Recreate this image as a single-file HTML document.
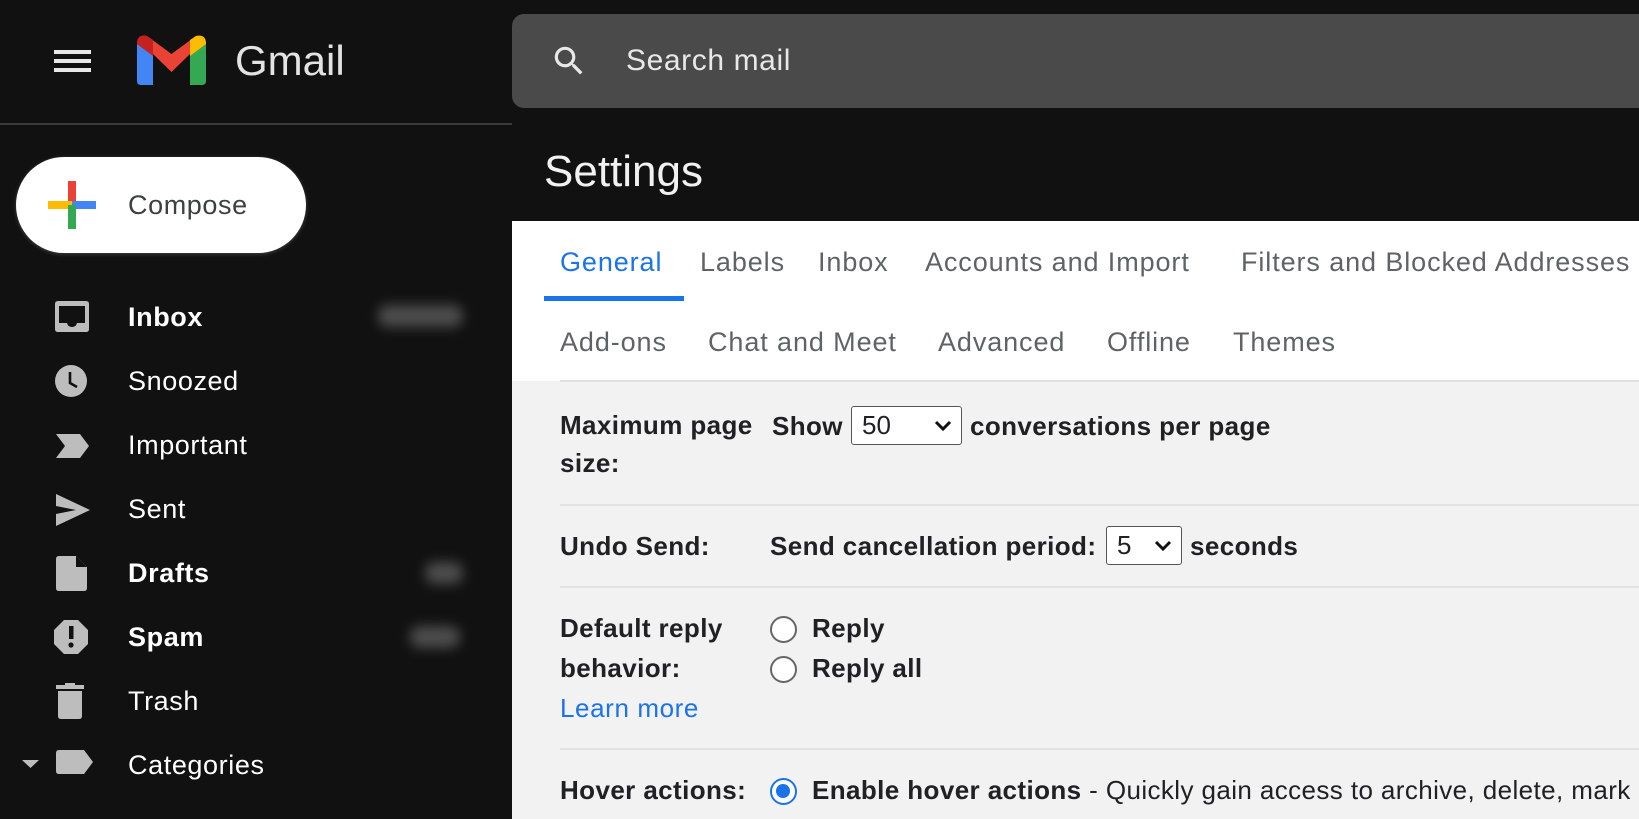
<!DOCTYPE html>
<html><head><meta charset="utf-8"><style>
*{margin:0;padding:0;box-sizing:border-box}
body{width:1639px;height:819px;overflow:hidden;background:#111;font-family:"Liberation Sans",sans-serif;position:relative}
.a{position:absolute;white-space:nowrap}
.nav{color:#fff;font-size:27px;left:128px;line-height:30px;letter-spacing:0.6px}
.ic{position:absolute;left:54px}
.tab{font-size:27px;color:#5f6368;line-height:30px;letter-spacing:0.9px}
.c{font-size:26px;font-weight:bold;color:#202124;line-height:30px;letter-spacing:0.4px}
.line{position:absolute;left:560px;right:0;height:2px;background:#e2e2e2}
.sel{position:absolute;background:#fff;border:1.5px solid #555;border-radius:3px;font-size:26px;color:#202124;padding-left:10px;line-height:36px}
.sel svg{position:absolute;right:9px;top:13px}
.radio{position:absolute;width:27px;height:27px;border-radius:50%;border:2px solid #666;background:#fff}
.blur{position:absolute;background:#666;filter:blur(6px);border-radius:10px;opacity:.7}
.clip{position:absolute;left:512px;top:0;width:1127px;height:819px;overflow:hidden}
.clip .a,.clip .line,.clip .sel,.clip .radio{margin-left:-512px}
</style></head><body>
<!-- header -->
<div class="a" style="left:54px;top:50px;width:37px;height:4px;background:#e8e8e8"></div>
<div class="a" style="left:54px;top:59px;width:37px;height:4px;background:#e8e8e8"></div>
<div class="a" style="left:54px;top:68px;width:37px;height:4px;background:#e8e8e8"></div>
<svg class="a" style="left:137px;top:34px" width="69" height="52" viewBox="0 0 69 52">
<path d="M0 10 L0 47 Q0 51 4 51 L16 51 L16 20 Z" fill="#4285f4"/>
<path d="M53 20 L53 51 L65 51 Q69 51 69 47 L69 10 Z" fill="#34a853"/>
<path d="M0 10 Q0 0 10 2 L34.5 20 L59 2 Q69 0 69 10 L53 22 L53 20 L34.5 38 L16 20 L16 22 Z" fill="#ea4335"/>
<path d="M53 6 L59 2 Q69 0 69 10 L53 22 Z" fill="#fbbc04"/>
<path d="M16 6 L10 2 Q0 0 0 10 L16 22 Z" fill="#c5221f"/>
</svg>
<div class="a" style="left:235px;top:37px;font-size:42px;color:#e3e3e3;line-height:48px">Gmail</div>
<div class="a" style="left:512px;top:14px;width:1140px;height:94px;background:#4a4a4a;border-radius:12px"></div>
<svg class="a" style="left:550px;top:42px" width="38" height="38" viewBox="0 0 24 24"><path d="M15.5 14h-.79l-.28-.27A6.470 6.470 0 0016 9.5 6.5 6.5 0 109.5 16c1.61 0 3.09-.59 4.23-1.57l.27.28v.79l5 4.99L20.49 19l-4.99-5zm-6 0C7.01 14 5 11.99 5 9.5S7.01 5 9.5 5 14 7.01 14 9.5 11.99 14 9.5 14z" fill="#e8e8e8"/></svg>
<div class="a" style="left:626px;top:44px;font-size:30px;color:#e8e8e8;line-height:34px;letter-spacing:0.6px">Search mail</div>
<div class="a" style="left:0;top:123px;width:512px;height:2px;background:#3a3a3a"></div>
<!-- compose -->
<div class="a" style="left:16px;top:157px;width:290px;height:96px;background:#fff;border-radius:48px;box-shadow:0 1px 4px rgba(255,255,255,.2)"></div>
<div class="a" style="left:68px;top:181px;width:8px;height:24px;background:#ea4335"></div>
<div class="a" style="left:48px;top:201px;width:24px;height:8px;background:#fbbc04"></div>
<div class="a" style="left:72px;top:201px;width:24px;height:8px;background:#4285f4"></div>
<div class="a" style="left:68px;top:205px;width:8px;height:24px;background:#34a853"></div>
<div class="a" style="left:128px;top:190px;font-size:27px;color:#3c4043;line-height:30px;letter-spacing:0.6px">Compose</div>
<!-- nav -->
<div class="a nav" style="top:302px;font-weight:bold">Inbox</div>
<div class="a nav" style="top:366px">Snoozed</div>
<div class="a nav" style="top:430px">Important</div>
<div class="a nav" style="top:494px">Sent</div>
<div class="a nav" style="top:558px;font-weight:bold">Drafts</div>
<div class="a nav" style="top:622px;font-weight:bold">Spam</div>
<div class="a nav" style="top:686px">Trash</div>
<div class="a nav" style="top:750px">Categories</div>
<div class="blur" style="left:378px;top:305px;width:85px;height:22px"></div>
<div class="blur" style="left:425px;top:562px;width:38px;height:22px"></div>
<div class="blur" style="left:410px;top:626px;width:50px;height:22px"></div>
<svg class="ic" width="36" height="36" viewBox="0 0 36 36" style="top:300px"><path d="M4 1h28q3 0 3 3v25q0 3-3 3H4q-3 0-3-3V4q0-3 3-3zm1 5v17h8q1 4 5 4t5-4h8V6z" fill="#bdbdbd"/></svg>
<svg class="ic" width="36" height="36" viewBox="0 0 36 36" style="top:364px"><circle cx="17" cy="17" r="16" fill="#bdbdbd"/><path d="M16 8v11l7 4" stroke="#111" stroke-width="2.6" fill="none"/></svg>
<svg class="ic" width="36" height="36" viewBox="0 0 36 36" style="top:428px"><path d="M2 6h24l9 12-9 12H2l9-12z" fill="#bdbdbd"/></svg>
<svg class="ic" width="36" height="36" viewBox="0 0 36 36" style="top:492px"><path d="M2 2l34 16L2 34v-12l20-4L2 14z" fill="#bdbdbd"/></svg>
<svg class="ic" width="36" height="36" viewBox="0 0 36 36" style="top:555px"><path d="M5 1h17l11 11v21q0 3-3 3H5q-3 0-3-3V4q0-3 3-3z" fill="#bdbdbd"/><path d="M22 1l11 11H22z" fill="#111"/></svg>
<svg class="ic" width="36" height="36" viewBox="0 0 36 36" style="top:619px"><path d="M10 1h14l10 10v14L24 35H10L0 25V11z" fill="#bdbdbd"/><rect x="15" y="7" width="4.5" height="13" fill="#111"/><circle cx="17" cy="26" r="2.6" fill="#111"/></svg>
<svg class="ic" width="36" height="36" viewBox="0 0 36 36" style="top:683px"><rect x="2" y="2" width="28" height="4" fill="#bdbdbd"/><rect x="11" y="0" width="10" height="3" fill="#bdbdbd"/><path d="M4 8h24v25q0 3-3 3H7q-3 0-3-3z" fill="#bdbdbd"/></svg>
<svg class="a" style="left:22px;top:760px" width="18" height="10"><path d="M0 0h17l-8.5 8z" fill="#bdbdbd"/></svg>
<svg class="ic" width="40" height="36" viewBox="0 0 40 36" style="top:747px;left:56px"><path d="M3 3h25l9 12-9 12H3q-3 0-3-3V6q0-3 3-3z" fill="#bdbdbd"/></svg>
<!-- settings -->
<div class="a" style="left:544px;top:147px;font-size:44px;color:#f1f1f1;line-height:50px">Settings</div>
<div class="a" style="left:512px;top:221px;width:1127px;height:160px;background:#fff"></div>
<div class="a" style="left:512px;top:381px;width:1127px;height:438px;background:#f2f2f2"></div>
<div class="a" style="left:560px;top:380px;width:1079px;height:2px;background:#e0e0e0"></div>
<div class="clip">
<div class="a tab" style="left:560px;top:247px;color:#1a73e8">General</div>
<div class="a tab" style="left:700px;top:247px">Labels</div>
<div class="a tab" style="left:818px;top:247px">Inbox</div>
<div class="a tab" style="left:925px;top:247px">Accounts and Import</div>
<div class="a tab" style="left:1241px;top:247px">Filters and Blocked Addresses</div>
<div class="a" style="left:544px;top:296px;width:140px;height:5px;background:#1a73e8"></div>
<div class="a tab" style="left:560px;top:327px">Add-ons</div>
<div class="a tab" style="left:708px;top:327px">Chat and Meet</div>
<div class="a tab" style="left:938px;top:327px">Advanced</div>
<div class="a tab" style="left:1107px;top:327px">Offline</div>
<div class="a tab" style="left:1233px;top:327px">Themes</div>
<!-- content -->
<div class="a c" style="left:560px;top:410px">Maximum page</div>
<div class="a c" style="left:560px;top:448px">size:</div>
<div class="a c" style="left:772px;top:411px">Show</div>
<div class="sel" style="left:851px;top:406px;width:111px;height:39px">50<svg width="18" height="12" viewBox="0 0 18 12"><path d="M2 2l7 7 7-7" stroke="#111" stroke-width="3" fill="none"/></svg></div>
<div class="a c" style="left:970px;top:411px">conversations per page</div>
<div class="line" style="top:504px"></div>
<div class="a c" style="left:560px;top:531px">Undo Send:</div>
<div class="a c" style="left:770px;top:531px">Send cancellation period:</div>
<div class="sel" style="left:1106px;top:526px;width:76px;height:39px">5<svg width="18" height="12" viewBox="0 0 18 12"><path d="M2 2l7 7 7-7" stroke="#111" stroke-width="3" fill="none"/></svg></div>
<div class="a c" style="left:1190px;top:531px">seconds</div>
<div class="line" style="top:586px"></div>
<div class="a c" style="left:560px;top:613px">Default reply</div>
<div class="a c" style="left:560px;top:653px">behavior:</div>
<div class="a" style="left:560px;top:693px;font-size:26px;color:#1a73e8;line-height:30px;letter-spacing:0.6px">Learn more</div>
<div class="radio" style="left:770px;top:616px"></div>
<div class="radio" style="left:770px;top:656px"></div>
<div class="a c" style="left:812px;top:613px">Reply</div>
<div class="a c" style="left:812px;top:653px">Reply all</div>
<div class="line" style="top:748px"></div>
<div class="a c" style="left:560px;top:775px">Hover actions:</div>
<div class="radio" style="left:770px;top:778px;border-color:#1a73e8;border-width:2.5px"><div style="position:absolute;left:4px;top:4px;width:14px;height:14px;border-radius:50%;background:#1a73e8"></div></div>
<div class="a c" style="left:812px;top:775px">Enable hover actions <span style="font-weight:normal">- Quickly gain access to archive, delete, mark as read</span></div>
</div>
</body></html>
